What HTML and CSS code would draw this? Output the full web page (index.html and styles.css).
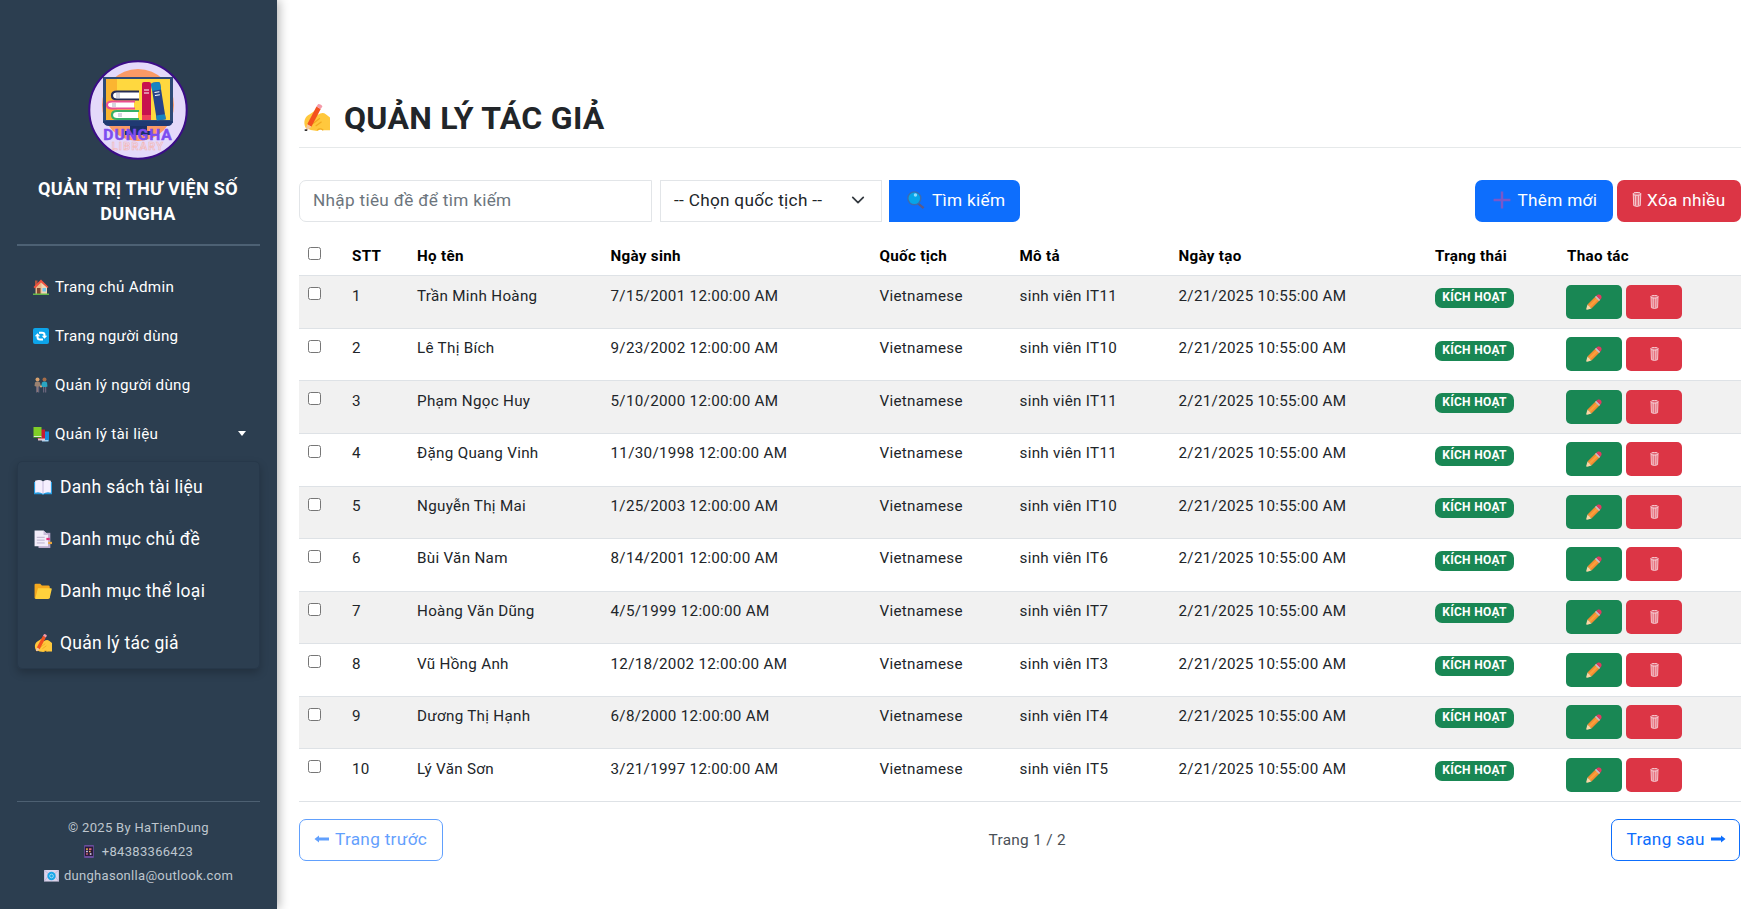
FILE: index.html
```html
<!DOCTYPE html>
<html lang="vi">
<head>
<meta charset="utf-8">
<title>Quản lý tác giả</title>
<link rel="stylesheet" href="styles.css">
</head>
<body>
<svg class="sprite" aria-hidden="true">
  <symbol id="writing" viewBox="0 0 32 32">
    <path d="M3 28 C0 21 2 15 8 12 L14 8 Q17 6 18.500 9 L17 13 Q23 9 27 12 L32 16 V31 H24 Q20 29 17 32 Q10 32 3 28Z" fill="#ffc83d"/>
    <path d="M12 23 L20 17 M15 26 L22 21 M17 31 Q20 28 24 31" stroke="#f2a91f" stroke-width="1.5" fill="none"/>
    <path d="M16 3 L21 6 L10 27 L5 24Z" fill="#f4511e"/>
    <path d="M16 3 L18 0 Q22 0 23 3 L21 6Z" fill="#f59aa9"/>
    <path d="M5 24 L10 27 L4 32 L3 31Z" fill="#f4c7a0"/><path d="M2 30h3v2H2Z" fill="#333"/>
  </symbol>
  <symbol id="house" viewBox="0 0 32 32">
    <path d="M4 3h5v12H4Z" fill="#b5543c"/><path d="M5 14 L16 4 L28 15 V30H5Z" fill="#e8b88a"/>
    <path d="M17 5 L28 15 V30H17Z" fill="#f1d5b5"/>
    <path d="M1 16 L16 1 L31 16 L29 18 L16 7 L4 19Z" fill="#f0523f"/>
    <path d="M8 18h7v12H8Z" fill="#81462f"/><path d="M19 18h7v7h-7Z" fill="#70c5e8"/><path d="M0 29h32v3H0Z" fill="#66b84a"/>
  </symbol>
  <symbol id="refresh" viewBox="0 0 32 32">
    <rect width="32" height="32" rx="4" fill="#0da4ea"/>
    <path d="M12 9.500 H18 Q23 9.500 23 14 V17 M20 23 H14 Q9 23 9 18 V15" fill="none" stroke="#fff" stroke-width="4"/>
    <path d="M17.500 15.500h11L23 21.500ZM3.500 16.500h11L9 10.500Z" fill="#fff"/>
  </symbol>
  <symbol id="people" viewBox="0 0 32 32">
    <circle cx="9" cy="5" r="4" fill="#d8a16e"/><circle cx="23" cy="5" r="4" fill="#a66d49"/>
    <path d="M4 11 Q9 7 14 11 L16 19 L12 19 V30H6V19L3 18Z" fill="#9a8272"/>
    <path d="M18 11 Q23 7 28 11 L29 19 L26 20H20L16 19Z" fill="#2aa6c2"/>
    <path d="M6 19h2.600v12H6ZM10 19h2.500v12H10ZM20 20h2.500v11H20ZM24 20h2.500v11H24Z" fill="#69647b"/>
    <circle cx="16" cy="19" r="2" fill="#e0ac7c"/>
  </symbol>
  <symbol id="books" viewBox="0 0 32 32">
    <path d="M17 11h15v18H17Z" fill="#1689dc"/><path d="M18 28h13v3H18Z" fill="#9fd2f5"/>
    <path d="M9 7h15v19H9Z" fill="#c51835"/><path d="M10 25h14v4H10Z" fill="#e4c4cb"/>
    <path d="M1 2h16v18H1Z" fill="#80ce27"/><path d="M1 20h16v4H2Z" fill="#dcebd0"/><path d="M1 22h16v2H1Z" fill="#438b25"/>
  </symbol>
  <symbol id="openbook" viewBox="0 0 32 32">
    <path d="M0 7h32v22H18q-2 2-4 0H0Z" fill="#249be0"/>
    <path d="M2 5 Q11 2 16 6 Q22 2 30 5 V26 Q22 24 16 28 Q10 24 2 26Z" fill="#f5efff"/>
    <path d="M16 6 V27" stroke="#bdb0d5" stroke-width="1.500"/>
  </symbol>
  <symbol id="pages" viewBox="0 0 32 32">
    <path d="M8 5h21v27H8Z" fill="#b9a9ca"/><path d="M25 21h7v4h-7Z" fill="#e7a53d"/>
    <path d="M1 1 H17 L25 9 V29 H1Z" fill="#f3edfa"/><path d="M17 1 V9 H25Z" fill="#cbbcda"/>
    <path d="M5 13h14M5 18h14M5 23h14" stroke="#b9aecb" stroke-width="1.700"/><path d="M22 14h6v4h-6Z" fill="#e5317f"/>
  </symbol>
  <symbol id="folder" viewBox="0 0 32 32">
    <path d="M1 5 Q1 3 3 3 H11 L14 6 H26 Q28 6 28 9 V29 H1Z" fill="#f5a91f"/>
    <path d="M7 11 H30 Q32 11 31.500 13 L28 28 Q27.500 30 25 30 H2Z" fill="#ffd13c"/>
  </symbol>
  <symbol id="phone" viewBox="0 0 24 32">
    <rect x="0" y="0" width="24" height="32" rx="2" fill="#6a4d9c"/><path d="M2 4h20v23H2Z" fill="#2a1a38"/>
    <path d="M5 8h4v4H5ZM12 14h4v4h-4Z" fill="#f1b24b"/><path d="M12 8h6v4h-6ZM5 20h4v4H5Z" fill="#e6697c"/><path d="M5 14h4v4H5ZM14 20h4v4h-4Z" fill="#e9e4ff"/>
  </symbol>
  <symbol id="mail" viewBox="0 0 32 26">
    <path d="M0 0h32v25H0Z" fill="#dcd4ec"/><path d="M0 0 L16 14 L32 0M0 25 L11 10M32 25L21 10" fill="none" stroke="#b5a9cf" stroke-width="1.500"/>
    <circle cx="16" cy="13" r="9" fill="#19a5e8"/><circle cx="16" cy="13" r="4" fill="none" stroke="#9bdcf8" stroke-width="2"/>
  </symbol>
  <symbol id="search" viewBox="0 0 32 32">
    <path d="M20 20 L31 29 L28 32 L18 23Z" fill="#5c5a87"/>
    <circle cx="13" cy="13" r="11.500" fill="#06a5e9" stroke="#3b6cb0" stroke-width="2.500"/>
    <circle cx="15" cy="7" r="3" fill="#8adcff"/>
  </symbol>
  <symbol id="plus" viewBox="0 0 32 32"><path d="M16 1v30M1 16h30" stroke="#7a58c9" stroke-width="4.400"/></symbol>
  <symbol id="bin" viewBox="0 0 20 32">
    <path d="M2 4 L3 29 Q10 33 17 29 L18 4Z" fill="#f6cbd3" fill-opacity=".4"/>
    <path d="M2 4 L3 29 Q10 32.500 17 29 L18 4M7 7V29M13 7V29" fill="none" stroke="#f6d5da" stroke-width="2"/>
    <ellipse cx="10" cy="4" rx="8.500" ry="3" fill="#df5e6e" stroke="#fae0e5" stroke-width="2"/>
  </symbol>
  <symbol id="pencil" viewBox="0 0 32 32">
    <path d="M20 4 L28 12 L11 29 L3 21Z" fill="#f28c32"/><path d="M22.500 6.500 L25.500 9.500 L8.500 26.500 L5.500 23.500Z" fill="#fba03c"/>
    <path d="M18 6 L26 14 L28.500 11.500 L20.500 3.500Z" fill="#c5bccb"/><path d="M20.500 3.500 L24 1 Q32 0 31 8 L28.500 11.500Z" fill="#e33961"/>
    <path d="M3 21 L11 29 L2.500 31.500 Q0 32 .5 29.500Z" fill="#fbd5a5"/>
  </symbol>
  <symbol id="arrow" viewBox="0 0 16 10"><path d="M1 3.500 H11 V1.500 L15.500 5 L11 8.500 V6.500 H1Z" fill="currentColor"/></symbol>
</svg>

<div class="layout">
  <aside class="sidebar">
    <div class="brand">
      <svg class="logo" viewBox="0 0 100 100">
        <circle cx="50" cy="50" r="48.700" fill="#e4d9fa" stroke="#3b0c87" stroke-width="2"/>
        <circle cx="50" cy="45" r="36" fill="#fb9a66"/>
        <path d="M15 17h70v46H15Z" fill="#2f4a78"/><path d="M18 19h64v41H18Z" fill="#ffd83f"/>
        <path d="M18 19h11v41H18Z" fill="#fbb531"/>
        <path d="M51 31H29q-5 0-5 4.500t5 4.500H51M46 41H24q-5 0-5 4t5 4H46M50 50.500H29q-5 0-5 4.500t5 4.500H50" fill="#fff"/>
        <path d="M51 31.500H29q-5 0-5 4t5 4H51" fill="none" stroke="#252c54" stroke-width="2.200"/>
        <path d="M47 41.500H24q-5 0-5 3.500t5 3.500H47" fill="none" stroke="#ec4f91" stroke-width="2.200"/>
        <path d="M51 51H29q-5 0-5 4t5 4H51" fill="none" stroke="#36b067" stroke-width="2.200"/>
        <path d="M28 33h4v5h-4ZM24 43h4v4h-4ZM30 53h4v4h-4Z" fill="#d4d5e0"/>
        <path d="M54 24q0-2 2-2h5q2 0 2 2v36h-9Z" fill="#c8104e"/><path d="M54 55h9v5h-9Z" fill="#ef3d58"/><path d="M56 30h5M56 33h5" stroke="#fff"/>
        <g transform="rotate(-9 71 42)"><path d="M66 24q0-2 2-2h5q2 0 2 2v36h-9Z" fill="#25438b"/><path d="M66 24q0-2 2-2h5q2 0 2 2v6h-9ZM66 55h9v5h-9Z" fill="#1684c1"/><path d="M68 32h5M68 35h5" stroke="#fff"/></g>
        <path d="M15 61h70q-1 5-5 5H21q-5 0-6-5Z" fill="#203a73"/><path d="M42 66h17v5H42ZM37 71h27v4H37Z" fill="#1c3164"/>
        <text x="50" y="79.500" class="logo-name">DUNGHA</text>
        <text x="50" y="89.500" class="logo-sub">LIBRARY</text>
      </svg>
      <div class="brand-title">QUẢN TRỊ THƯ VIỆN SỐ<br>DUNGHA</div>
    </div>
    <nav class="menu">
      <a><svg><use href="#house"/></svg>Trang chủ Admin</a>
      <a><svg><use href="#refresh"/></svg>Trang người dùng</a>
      <a><svg><use href="#people"/></svg>Quản lý người dùng</a>
      <a><svg><use href="#books"/></svg>Quản lý tài liệu<span class="caret"></span></a>
    </nav>
    <div class="submenu">
      <a><svg><use href="#openbook"/></svg>Danh sách tài liệu</a>
      <a><svg><use href="#pages"/></svg>Danh mục chủ đề</a>
      <a><svg><use href="#folder"/></svg>Danh mục thể loại</a>
      <a><svg><use href="#writing"/></svg>Quản lý tác giả</a>
    </div>
    <footer class="contact">
      <div>© 2025 By HaTienDung</div>
      <div><svg class="phone"><use href="#phone"/></svg>+84383366423</div>
      <div><svg><use href="#mail"/></svg>dunghasonlla@outlook.com</div>
    </footer>
  </aside>

  <main class="content">
    <h1><svg><use href="#writing"/></svg>QUẢN LÝ TÁC GIẢ</h1>
    <div class="toolbar">
      <input class="keyword" type="text" placeholder="Nhập tiêu đề để tìm kiếm">
      <div class="select"><span>-- Chọn quốc tịch --</span><svg viewBox="0 0 16 16"><path d="m2 5 6 6 6-6"/></svg></div>
      <button class="btn primary find"><svg><use href="#search"/></svg><span>Tìm kiếm</span></button>
      <button class="btn primary add"><svg><use href="#plus"/></svg><span>Thêm mới</span></button>
      <button class="btn danger purge"><svg><use href="#bin"/></svg><span>Xóa nhiều</span></button>
    </div>
    <table class="authors">
      <thead><tr><th><input type="checkbox"></th><th>STT</th><th>Họ tên</th><th>Ngày sinh</th><th>Quốc tịch</th><th>Mô tả</th><th>Ngày tạo</th><th>Trạng thái</th><th>Thao tác</th></tr></thead>
      <tbody>
        <tr><td><input type="checkbox"></td><td>1</td><td>Trần Minh Hoàng</td><td>7/15/2001 12:00:00 AM</td><td>Vietnamese</td><td>sinh viên IT11</td><td>2/21/2025 10:55:00 AM</td><td><span class="badge">KÍCH HOẠT</span></td><td class="actions"><button class="edit"><svg><use href="#pencil"/></svg></button><button class="remove"><svg><use href="#bin"/></svg></button></td></tr>
        <tr><td><input type="checkbox"></td><td>2</td><td>Lê Thị Bích</td><td>9/23/2002 12:00:00 AM</td><td>Vietnamese</td><td>sinh viên IT10</td><td>2/21/2025 10:55:00 AM</td><td><span class="badge">KÍCH HOẠT</span></td><td class="actions"><button class="edit"><svg><use href="#pencil"/></svg></button><button class="remove"><svg><use href="#bin"/></svg></button></td></tr>
        <tr><td><input type="checkbox"></td><td>3</td><td>Phạm Ngọc Huy</td><td>5/10/2000 12:00:00 AM</td><td>Vietnamese</td><td>sinh viên IT11</td><td>2/21/2025 10:55:00 AM</td><td><span class="badge">KÍCH HOẠT</span></td><td class="actions"><button class="edit"><svg><use href="#pencil"/></svg></button><button class="remove"><svg><use href="#bin"/></svg></button></td></tr>
        <tr><td><input type="checkbox"></td><td>4</td><td>Đặng Quang Vinh</td><td>11/30/1998 12:00:00 AM</td><td>Vietnamese</td><td>sinh viên IT11</td><td>2/21/2025 10:55:00 AM</td><td><span class="badge">KÍCH HOẠT</span></td><td class="actions"><button class="edit"><svg><use href="#pencil"/></svg></button><button class="remove"><svg><use href="#bin"/></svg></button></td></tr>
        <tr><td><input type="checkbox"></td><td>5</td><td>Nguyễn Thị Mai</td><td>1/25/2003 12:00:00 AM</td><td>Vietnamese</td><td>sinh viên IT10</td><td>2/21/2025 10:55:00 AM</td><td><span class="badge">KÍCH HOẠT</span></td><td class="actions"><button class="edit"><svg><use href="#pencil"/></svg></button><button class="remove"><svg><use href="#bin"/></svg></button></td></tr>
        <tr><td><input type="checkbox"></td><td>6</td><td>Bùi Văn Nam</td><td>8/14/2001 12:00:00 AM</td><td>Vietnamese</td><td>sinh viên IT6</td><td>2/21/2025 10:55:00 AM</td><td><span class="badge">KÍCH HOẠT</span></td><td class="actions"><button class="edit"><svg><use href="#pencil"/></svg></button><button class="remove"><svg><use href="#bin"/></svg></button></td></tr>
        <tr><td><input type="checkbox"></td><td>7</td><td>Hoàng Văn Dũng</td><td>4/5/1999 12:00:00 AM</td><td>Vietnamese</td><td>sinh viên IT7</td><td>2/21/2025 10:55:00 AM</td><td><span class="badge">KÍCH HOẠT</span></td><td class="actions"><button class="edit"><svg><use href="#pencil"/></svg></button><button class="remove"><svg><use href="#bin"/></svg></button></td></tr>
        <tr><td><input type="checkbox"></td><td>8</td><td>Vũ Hồng Anh</td><td>12/18/2002 12:00:00 AM</td><td>Vietnamese</td><td>sinh viên IT3</td><td>2/21/2025 10:55:00 AM</td><td><span class="badge">KÍCH HOẠT</span></td><td class="actions"><button class="edit"><svg><use href="#pencil"/></svg></button><button class="remove"><svg><use href="#bin"/></svg></button></td></tr>
        <tr><td><input type="checkbox"></td><td>9</td><td>Dương Thị Hạnh</td><td>6/8/2000 12:00:00 AM</td><td>Vietnamese</td><td>sinh viên IT4</td><td>2/21/2025 10:55:00 AM</td><td><span class="badge">KÍCH HOẠT</span></td><td class="actions"><button class="edit"><svg><use href="#pencil"/></svg></button><button class="remove"><svg><use href="#bin"/></svg></button></td></tr>
        <tr><td><input type="checkbox"></td><td>10</td><td>Lý Văn Sơn</td><td>3/21/1997 12:00:00 AM</td><td>Vietnamese</td><td>sinh viên IT5</td><td>2/21/2025 10:55:00 AM</td><td><span class="badge">KÍCH HOẠT</span></td><td class="actions"><button class="edit"><svg><use href="#pencil"/></svg></button><button class="remove"><svg><use href="#bin"/></svg></button></td></tr>
      </tbody>
    </table>
    <div class="pager">
      <button class="page-btn prev" disabled><svg><use href="#arrow"/></svg><span>Trang trước</span></button>
      <span class="page-info">Trang 1 / 2</span>
      <button class="page-btn next"><span>Trang sau</span><svg><use href="#arrow"/></svg></button>
    </div>
  </main>
</div>
</body>
</html>
```
FILE: styles.css
```css
* { box-sizing: border-box; }
body {
  margin: 0;
  height: 909px;
  overflow: hidden;
  background: #fff;
  color: #212529;
  font-family: Roboto, "Open Sans", sans-serif;
  letter-spacing: .3px;
}
svg { flex: none; }
button, input { font-family: inherit; letter-spacing: inherit; }
.sprite { display: none; }
.layout { display: flex; height: 909px; }

.sidebar {
  display: flex;
  flex-direction: column;
  flex: none;
  width: 277px;
  padding: 60px 17px 0;
  background: #2c3e50;
  color: #fff;
  box-shadow: 2px 0 10px rgba(0, 0, 0, .3);
  z-index: 1;
}
.brand {
  display: flex;
  flex-direction: column;
  align-items: center;
  height: 186px;
  padding-right: 1px;
  border-bottom: 2px solid #4d6174;
}
.logo { width: 100px; height: 100px; }
.logo-name, .logo-sub { text-anchor: middle; font-weight: 700; }
.logo-name { font-size: 15.5px; fill: #7c4df0; stroke: #7c4df0; stroke-width: .5px; letter-spacing: 1px; }
.logo-sub { font-size: 11px; fill: #e6d5f0; stroke: #f6b5b0; stroke-width: .5px; letter-spacing: 1.2px; }
.brand-title {
  margin-top: 17px;
  font-size: 18px;
  font-weight: 700;
  line-height: 24.7px;
  text-align: center;
  white-space: nowrap;
}
.menu { padding-top: 17px; }
.menu a {
  display: flex;
  align-items: center;
  height: 48.8px;
  padding: 0 14px 0 15.5px;
  font-size: 15.2px;
}
.menu svg { width: 16px; height: 16px; margin-right: 6.5px; }
.caret {
  margin-left: auto;
  border: 4.5px solid transparent;
  border-top: 5px solid #fff;
  border-bottom: 0;
}
.submenu {
  height: 208px;
  margin: 3px 0 0;
  border: 1px solid #27384a;
  border-radius: 5px;
  box-shadow: 0 4px 9px rgba(0, 0, 0, .22);
}
.submenu a {
  display: flex;
  align-items: center;
  height: 52px;
  padding: 0 0 2px 16px;
  font-size: 17.5px;
}
.submenu svg { width: 18px; height: 18px; margin-right: 8px; }
.contact {
  margin-top: auto;
  height: 108px;
  padding-top: 13px;
  border-top: 1px solid #4d6072;
  color: #bec6ce;
  font-size: 13px;
}
.contact div {
  display: flex;
  align-items: center;
  justify-content: center;
  height: 24.4px;
}
.contact svg { width: 15px; height: 12px; margin-right: 5px; }
.contact .phone { width: 10px; height: 13px; margin-right: 8px; }

.content { flex: none; width: 1463.5px; padding: 92px 0 0 22px; }
h1 {
  display: flex;
  align-items: center;
  height: 56px;
  margin: 0;
  padding: 0 0 4px 4px;
  border-bottom: 1px solid #e6e9ea;
  font-size: 32px;
  font-weight: 700;
}
h1 svg { width: 27px; height: 27px; margin-right: 14px; }
.toolbar { display: flex; height: 42px; margin-top: 32px; }
.keyword {
  width: 353px;
  padding: 0 13px 3px;
  border: 1px solid #e2e5e8;
  border-radius: 7px 0 0 7px;
  background: #fff;
  font-size: 17.2px;
}
.keyword::placeholder { color: #6c757d; opacity: 1; }
.select {
  display: flex;
  align-items: center;
  justify-content: space-between;
  width: 222px;
  margin: 0 7px 0 8px;
  padding: 0 16px 2px 13px;
  border: 1px solid #e2e5e8;
  font-size: 17.2px;
}
.select svg { width: 14px; height: 14px; }
.select path { fill: none; stroke: #343a40; stroke-width: 2; stroke-linecap: round; stroke-linejoin: round; }
.btn {
  display: flex;
  align-items: center;
  padding: 0 0 3px;
  border: 0;
  border-radius: 7px;
  color: #fff;
  font-size: 17.2px;
}
.primary { background: #0d6efd; }
.danger { background: #dc3545; }
.find { width: 131px; padding-left: 18px; border-radius: 0 7px 7px 0; }
.find svg { width: 18px; height: 18px; margin-right: 7px; }
.add { width: 138px; margin-left: auto; padding-left: 18px; }
.add svg { width: 18px; height: 18px; margin-right: 7px; }
.purge { width: 124px; margin-left: 4px; padding-left: 15px; }
.purge svg { width: 10px; height: 15px; margin-right: 5.5px; }

.authors { display: block; font-size: 15.2px; line-height: 22.5px; }
.authors thead, .authors tbody { display: block; }
.authors tr {
  display: grid;
  grid-template-columns: 45px 65px 193.5px 269px 140px 159px 256.5px 132px 1fr;
  height: 52.56px;
  border-bottom: 1px solid #dee2e6;
}
.authors thead tr { height: 54.4px; padding-top: 14.4px; }
.authors tbody tr:nth-child(odd) { background: #f1f1f1; }
.authors th, .authors td { padding: 8.3px 8px 0; text-align: left; white-space: nowrap; }
.authors th { color: #000; font-weight: 700; }
.authors input { display: block; width: 13px; height: 13px; margin: 2.7px 0 0 1px; }
.authors thead input { margin-top: 2px; }
.badge {
  display: block;
  width: 79px;
  height: 20px;
  margin-top: 3.3px;
  border-radius: 7px;
  background: #198754;
  color: #fff;
  font-size: 12px;
  font-weight: 700;
  line-height: 18px;
  text-align: center;
}
.authors .actions { display: flex; gap: 4px; padding-left: 7px; }
.actions button {
  display: flex;
  align-items: center;
  justify-content: center;
  width: 56px;
  height: 34px;
  padding: 0;
  border: 0;
  border-radius: 5px;
}
.edit { background: #198754; }
.remove { background: #dc3545; }
.edit svg { width: 16px; height: 16px; }
.remove svg { width: 9px; height: 14px; }

.pager { display: flex; align-items: center; justify-content: space-between; margin-top: 17px; }
.page-btn {
  display: flex;
  align-items: center;
  height: 42px;
  padding: 0 0 1px;
  border: 1px solid #0d6efd;
  border-radius: 7px;
  background: #fff;
  color: #0d6efd;
  font-size: 17.2px;
}
.page-btn svg { width: 16px; height: 10px; }
.prev { width: 144px; padding-left: 14px; opacity: .65; }
.prev svg { margin-right: 5px; transform: scaleX(-1); }
.next { width: 129px; padding-left: 14px; }
.next svg { margin-left: 5px; }
.page-info { color: #495057; font-size: 15.4px; }
```
